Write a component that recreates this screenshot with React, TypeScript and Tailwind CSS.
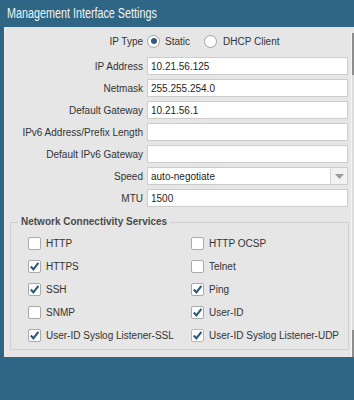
import React from "react";

const fields = [
  { label: "IP Address", value: "10.21.56.125" },
  { label: "Netmask", value: "255.255.254.0" },
  { label: "Default Gateway", value: "10.21.56.1" },
  { label: "IPv6 Address/Prefix Length", value: "" },
  { label: "Default IPv6 Gateway", value: "" },
];

const services = [
  { name: "HTTP", checked: false },
  { name: "HTTP OCSP", checked: false },
  { name: "HTTPS", checked: true },
  { name: "Telnet", checked: false },
  { name: "SSH", checked: true },
  { name: "Ping", checked: true },
  { name: "SNMP", checked: false },
  { name: "User-ID", checked: true },
  { name: "User-ID Syslog Listener-SSL", checked: true },
  { name: "User-ID Syslog Listener-UDP", checked: true, focused: true },
];

function Checkbox({ checked, focused }: { checked: boolean; focused?: boolean }) {
  return (
    <span
      className={`flex w-[13px] h-[13px] shrink-0 items-center justify-center rounded-[2px] border bg-white ${
        focused ? "border-[#e6b54a]" : "border-[#a9a9a9]"
      }`}
    >
      {checked && (
        <svg width="11" height="11" viewBox="0 0 11 11">
          <path d="M1.8 5.6 L4.4 8.3 L9.4 1.9" fill="none" stroke="#2b5a7a" strokeWidth="2.1" />
        </svg>
      )}
    </span>
  );
}

function Radio({ checked }: { checked: boolean }) {
  return (
    <span className="flex w-[13px] h-[13px] shrink-0 items-center justify-center rounded-full border border-[#a3a3a3] bg-white">
      {checked && <span className="w-[6px] h-[6px] rounded-full bg-[#2c5b7b]" />}
    </span>
  );
}

function Row({ label, children }: { label: string; children: React.ReactNode }) {
  return (
    <div className="flex h-[22px] items-center">
      <div className="w-[139px] shrink-0 pr-[1px] text-right text-[#333]">{label}</div>
      <div className="ml-[3px] flex-1">{children}</div>
    </div>
  );
}

export default function App() {
  return (
    <div className="w-[354px] h-[400px] overflow-hidden bg-[#2f6685] font-['Liberation_Sans',Arial,sans-serif] text-[10px]">
      <div className="h-[27px] pl-[7px] pt-[5px] text-[14px] leading-[16px] text-[#f4f4f4]">
        <span className="inline-block origin-left scale-x-[0.77] whitespace-nowrap">
          Management Interface Settings
        </span>
      </div>

      <div className="ml-[4px] flex h-[330px] border-l border-[#efefef] bg-[#e6e6e6]">
        <div className="flex-1 pt-[3px] pr-[3px]">
          <Row label="IP Type">
            <div className="flex items-center text-[#333]">
              <Radio checked />
              <span className="ml-[5px]">Static</span>
              <span className="ml-[14px]"><Radio checked={false} /></span>
              <span className="ml-[6px]">DHCP Client</span>
            </div>
          </Row>

          <div className="mt-[3px]">
            {fields.map((f) => (
              <Row key={f.label} label={f.label}>
                <div className="flex h-[18px] items-center border border-[#cdcdcd] bg-white pl-[3px] text-[#1e1e1e]">
                  {f.value}
                </div>
              </Row>
            ))}
            <Row label="Speed">
              <div className="flex h-[18px] items-center border border-[#cdcdcd] bg-white text-[#1e1e1e]">
                <span className="flex-1 pl-[3px]">auto-negotiate</span>
                <span className="flex h-full w-[17px] items-center justify-center border-l border-[#d6d6d6] bg-[#f2f2f2]">
                  <svg width="9" height="5" viewBox="0 0 9 5">
                    <path d="M0 0 H9 L4.5 5 Z" fill="#9a9a9a" />
                  </svg>
                </span>
              </div>
            </Row>
            <Row label="MTU">
              <div className="flex h-[18px] items-center border border-[#cdcdcd] bg-white pl-[3px] text-[#1e1e1e]">
                1500
              </div>
            </Row>
          </div>

          <fieldset className="ml-[5px] mr-[-1px] mt-[7px] border border-[#cfcfcf] pb-[2px]">
            <legend className="ml-[7px] px-[3px] text-[10px] font-bold leading-[12px] text-[#4a4a4a]">
              Network Connectivity Services
            </legend>
            <div className="ml-[17px] mt-[4px] grid grid-cols-[163px_1fr]">
              {services.map((s) => (
                <div key={s.name} className="flex h-[23px] items-center text-[#333]">
                  <Checkbox checked={s.checked} focused={s.focused} />
                  <span className="ml-[5px]">{s.name}</span>
                </div>
              ))}
            </div>
          </fieldset>
        </div>

        <div className="mt-[6px] flex w-[3px] flex-col border-l border-[#f4f4f4]">
          <div className="h-[42px] bg-[#8d8d8d]" />
          <div className="flex-1 bg-[#dcdcdc]" />
          <div className="h-[27px] bg-[#8d8d8d]" />
        </div>
      </div>
    </div>
  );
}
